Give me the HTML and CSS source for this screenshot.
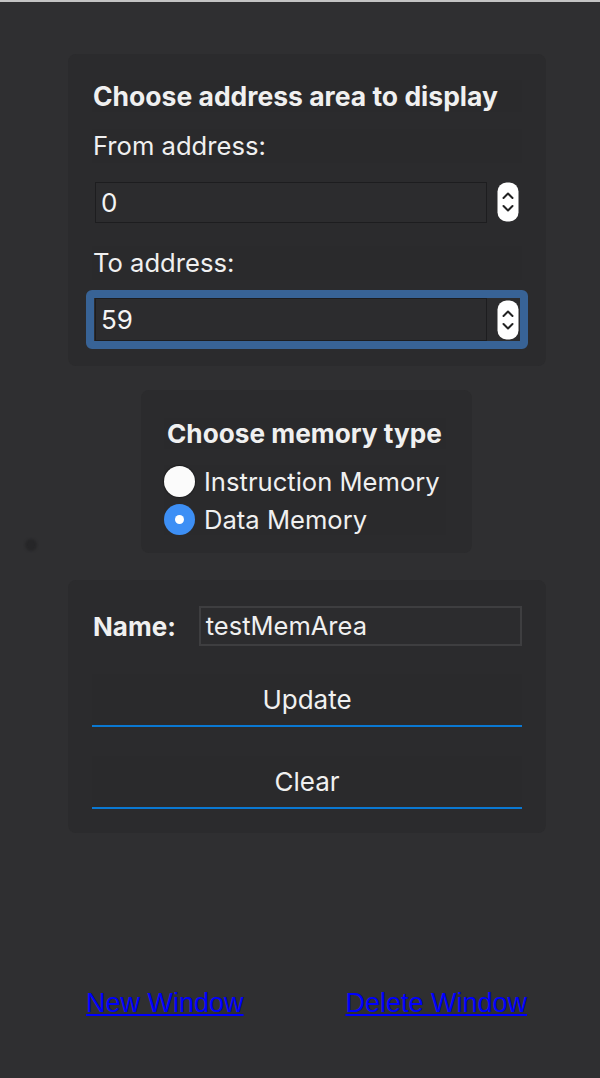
FILE: index.html
```html
<!DOCTYPE html>
<html>
<head>
<meta charset="utf-8">
<link rel="stylesheet" href="styles.css">
</head>
<body>
<div class="topline"></div>
<span class="dot"></span>
<main class="column">
  <section class="panel address">
    <div class="row title">Choose address area to display</div>
    <div class="row label from">From address:</div>
    <div class="field">
      <div class="input"><span>0</span></div>
      <svg class="spin" width="22" height="40" viewBox="0 0 22 40"><rect x="0.5" y="0.5" width="21" height="39" rx="9" fill="#fff"/><path d="M6.5 16 L11 11.5 L15.5 16" fill="none" stroke="#222" stroke-width="2" stroke-linecap="round" stroke-linejoin="round"/><path d="M6.5 24 L11 28.5 L15.5 24" fill="none" stroke="#222" stroke-width="2" stroke-linecap="round" stroke-linejoin="round"/></svg>
    </div>
    <div class="row label to">To address:</div>
    <div class="focus">
      <div class="field">
        <div class="input"><span>59</span></div>
        <svg class="spin" width="22" height="40" viewBox="0 0 22 40"><rect x="0.5" y="0.5" width="21" height="39" rx="9" fill="#fff"/><path d="M6.5 16 L11 11.5 L15.5 16" fill="none" stroke="#222" stroke-width="2" stroke-linecap="round" stroke-linejoin="round"/><path d="M6.5 24 L11 28.5 L15.5 24" fill="none" stroke="#222" stroke-width="2" stroke-linecap="round" stroke-linejoin="round"/></svg>
      </div>
    </div>
  </section>

  <section class="panel memtype">
    <div class="row title">Choose memory type</div>
    <div class="radios">
      <label class="radio"><span class="circle off"></span>Instruction Memory</label>
      <label class="radio"><span class="circle on"></span>Data Memory</label>
    </div>
  </section>

  <section class="panel naming">
    <div class="namerow">
      <span class="namelabel">Name:</span>
      <div class="nameinput">testMemArea</div>
    </div>
    <div class="btn update">Update</div>
    <div class="btn clear">Clear</div>
  </section>
</main>
<nav class="links">
  <a href="#">New Window</a>
  <a href="#">Delete Window</a>
</nav>
</body>
</html>
```

FILE: styles.css
```css
html, body {
  margin: 0;
  padding: 0;
  background: #2f2f31;
  height: 1078px;
  overflow: hidden;
}
body {
  font-family: Inter, "Noto Sans", sans-serif;
  color: #f0f0f0;
  position: relative;
}
.topline {
  height: 2px;
  background: #c4c4c4;
}
.dot {
  position: absolute;
  left: 25px;
  top: 539px;
  width: 12px;
  height: 12px;
  border-radius: 50%;
  background: #262628;
  filter: blur(1px);
}
.column {
  margin-left: 68px;
  width: 478px;
  padding-top: 52px;
}
.panel {
  background: #2b2b2d;
  border-radius: 8px;
  box-sizing: border-box;
}
.row {
  background: #2a2a2c;
}
.address {
  height: 312px;
  padding: 26px 24px 0 24px;
}
.title {
  font-weight: 700;
  font-size: 26.5px;
  height: 32px;
  line-height: 32px;
  padding-left: 1px;
}
.label {
  font-size: 25.6px;
  height: 34px;
  line-height: 34px;
  padding-left: 1px;
}
.from { margin-top: 17px; }
.to { margin-top: 23px; }
.field {
  display: flex;
  align-items: center;
  gap: 10px;
  height: 42px;
}
.address > .field { margin-top: 18px; padding-left: 3px; }
.input {
  width: 392px;
  height: 41px;
  box-sizing: border-box;
  border: 1px solid #1d1d1f;
  background: #2c2c2e;
  font-size: 26px;
  line-height: 39px;
  padding-left: 5px;
  color: #f4f4f4;
}
.spin { display: block; flex: none; }
.focus {
  margin-top: 10px;
  margin-left: -6px;
  width: 442px;
  height: 59px;
  box-sizing: border-box;
  border: 8px solid #386396;
  border-radius: 6px;
  background: #2c2c2e;
  padding-left: 1px;
}
.focus .field { height: 43px; }
.focus .input { height: 43px; line-height: 41px; }

.memtype {
  margin: 24px 0 0 73px;
  width: 331px;
  height: 163px;
  padding: 28px 0 0 23px;
}
.memtype .title {
  display: inline-block;
  font-size: 26.2px;
  padding: 0 4px 0 3px;
  height: 31px;
  line-height: 31px;
}
.radios {
  margin-top: 16px;
  display: flex;
  flex-direction: column;
  gap: 6px;
  background: #2a2a2c;
  width: 282px;
}
.radio {
  display: flex;
  align-items: center;
  gap: 9px;
  font-size: 25.6px;
  height: 32px;
}
.circle {
  width: 31px;
  height: 31px;
  border-radius: 50%;
  box-sizing: border-box;
  flex: none;
  position: relative;
}
.circle.off {
  background: #fbfbfb;
  box-shadow: 0 0 1px 1px rgba(0,0,0,0.3);
}
.circle.on {
  background: #3d8ff5;
}
.circle.on::after {
  content: "";
  position: absolute;
  left: 11px;
  top: 11px;
  width: 9px;
  height: 9px;
  border-radius: 50%;
  background: #fff;
}

.naming {
  margin-top: 27px;
  height: 253px;
  padding: 26px 24px 0 24px;
}
.namerow {
  display: flex;
  align-items: center;
  height: 40px;
}
.namelabel {
  font-weight: 700;
  font-size: 26px;
  width: 106px;
  padding-left: 1px;
}
.nameinput {
  width: 324px;
  height: 40px;
  box-sizing: border-box;
  border: 2px solid #3e3e40;
  font-size: 25.5px;
  line-height: 36px;
  padding-left: 5px;
  background: #2c2c2e;
}
.btn {
  height: 53px;
  box-sizing: border-box;
  border-bottom: 2px solid #0a78d2;
  background: #2a2a2c;
  text-align: center;
  font-size: 26px;
  line-height: 52px;
}
.update { margin-top: 28px; }
.clear { margin-top: 29px; }

.links {
  position: absolute;
  top: 988px;
  left: 86px;
  width: 441px;
  display: flex;
  justify-content: space-between;
}
.links a {
  font-family: "Liberation Sans", Arial, sans-serif;
  font-size: 27px;
  color: #0000ff;
  text-decoration: underline;
}
```
